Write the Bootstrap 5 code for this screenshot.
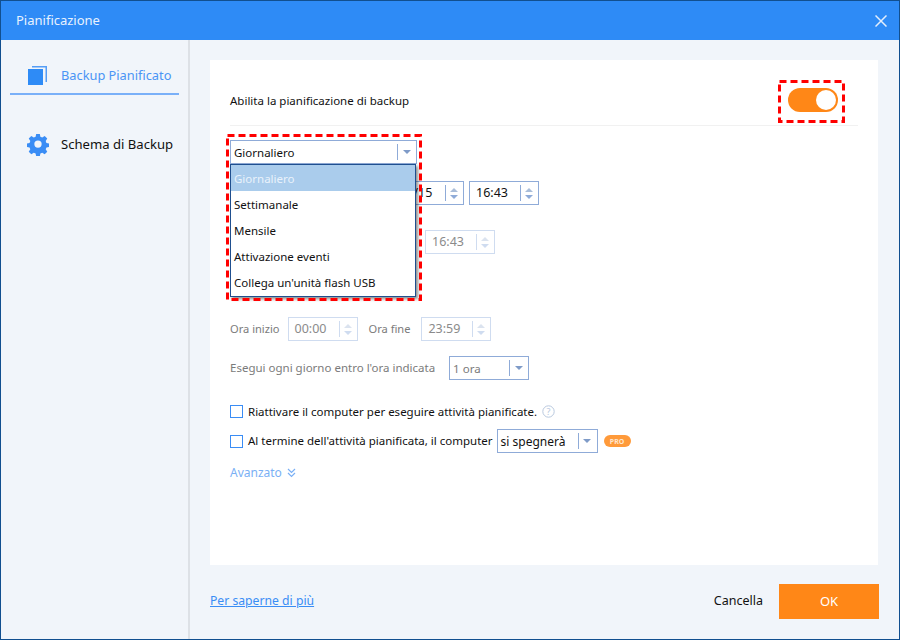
<!DOCTYPE html>
<html lang="it">
<head>
<meta charset="utf-8">
<title>Pianificazione</title>
<link href="https://cdn.jsdelivr.net/npm/bootstrap@5.3.0/dist/css/bootstrap.min.css" rel="stylesheet">
<style>
html,body{margin:0;height:640px;overflow:hidden;background:#f1f5fa}
body{font-family:"Noto Sans","DejaVu Sans",sans-serif;font-size:11.5px;color:#111;line-height:1}
.win{width:900px;height:640px;border:1px solid #114f8f;background:#f1f5fa}
.titlebar{height:39px;background:#2e8bf6;color:#e8f2fe;padding:0 15px;font-size:13px}
.titlebar svg{margin-right:-3px}
.bodyrow{height:599px}
.side{width:189px;border-right:2px solid #dde1e6;padding:9px 9px 0}
.tab{padding-left:18px;font-size:12.8px;gap:14px}
.tab-on{color:#4a94f5;border-bottom:2px solid #7ab0f8;height:46px;padding-top:8px}
.tab-off{margin-top:25px;height:50px;padding-left:17px;gap:12px;font-size:13.1px}
.mainpane{padding:20px 21px 20px 20px}
.panel{background:#fff;height:505px;padding:0 20px;position:relative}
.headrow{height:66px;border-bottom:1px solid #f1f1f1;padding-bottom:13px}
.headtext{padding-bottom:6px}
.switchy{width:50px;height:24px;border-radius:12px;background:#ff8717;position:relative;margin-right:20px}
.switchy::after{content:"";position:absolute;right:2px;top:2px;width:20px;height:20px;border-radius:50%;background:#fff}
.fld{height:24px;border:1px solid #8fabd8;background:#fff;position:relative}
.fld-dim{border-color:#cfdcf0;color:#8b8b8b}
.fld-text{padding:1px 0 0 6px;flex:1;font-size:12.5px}
.fld-date{padding-left:11px}
.fld-sel{padding-left:3px;font-size:11.5px}
.spin{width:17px;height:16px;border-left:1px solid #8fabd8;display:flex;flex-direction:column;align-items:center;justify-content:center;gap:3px;margin-right:1px}
.fld-dim .spin{border-color:#cfdcf0}
.up,.dn{width:0;height:0;border-left:4px solid transparent;border-right:4px solid transparent}
.up{border-bottom:4px solid #a9bdd9}.dn{border-top:4px solid #8fabd8}
.fld-dim .up{border-bottom-color:#dbe3ef}.fld-dim .dn{border-top-color:#cfdcf0}
.caret-box{width:18px;height:16px;border-left:1px solid #8fabd8;display:flex;align-items:center;justify-content:center;margin-right:1px}
.caret-box i{width:0;height:0;border-left:4px solid transparent;border-right:4px solid transparent;border-top:4px solid #7f9bc8}
.sel-top{width:187px;margin-top:14px}
.r1{margin-top:17px;padding-left:131px;gap:5px}
.r2{margin-top:25px;padding-left:195px}
.r3{margin-top:63px;gap:10px;color:#7b7b7b;font-size:11.1px}
.r3 .lab1{margin-right:-2px}
.r3 .lab2{margin:0 1px}
.r4{margin-top:15px;gap:14px;color:#7b7b7b}
.chk{width:13px;height:13px;border:1px solid #3a8df5;background:#fff;flex:none}
.r5{margin-top:25px;gap:5px}
.r6{margin-top:11px;gap:5px;height:24px}
.r6 .lab3{margin-right:-1px}
.r6 .sp-big{font-size:12px}
.adv{margin-top:14px;color:#7ab0f5;gap:5px;font-size:12px}
.dash{position:absolute;pointer-events:none}
.dash rect{fill:none;stroke:#f00;stroke-width:3;stroke-dasharray:7 4}
.menu-pop{position:absolute;left:20px;top:104px;width:186px;height:133px;background:#fff;border:1px solid #1f4f8f;box-shadow:2px 2px 3px rgba(0,0,0,.45)}
.menu-pop div{height:26px;padding:1px 0 0 3px;display:flex;align-items:center}
.menu-pop .act{background:#aaccec;color:#e9f2fb}
.badge-pro{width:27px;height:12px;border-radius:6px;background:#ff9a3a;color:#ffe6cd;font-size:7px;display:flex;align-items:center;justify-content:center;font-weight:700;margin-left:1px}
.footrow{height:54px;padding-top:18px}
.more{color:#3a8df5;text-decoration:underline;font-size:12.2px}
.cancel{color:#111;margin-right:16px;font-size:12.5px}
.okbtn{width:100px;height:35px;background:#ff8717;color:#fff;font-size:13px;margin-right:-1px}
</style>
</head>
<body>
<div class="win d-flex flex-column">
  <div class="titlebar d-flex align-items-center justify-content-between">
    <span>Pianificazione</span>
    <svg width="12" height="12" viewBox="0 0 12 12"><path d="M.5 .5L11.500 11.500M11.500 .5L.5 11.500" stroke="#e3eefc" stroke-width="1.500" fill="none"/></svg>
  </div>
  <div class="bodyrow d-flex">
    <div class="side">
      <div class="tab tab-on d-flex align-items-center">
        <svg width="19" height="19" viewBox="0 0 19 19"><path d="M4 0H19V16H17.500V1.500H4Z" fill="#3a8df5" opacity=".85"/><rect x="0" y="3" width="15" height="16" fill="#2e8bf6"/></svg>
        <span>Backup Pianificato</span>
      </div>
      <div class="tab tab-off d-flex align-items-center">
        <svg width="22" height="22" viewBox="0 0 24 24"><path fill="#3a8df5" fill-rule="evenodd" d="M10 1h4l.6 3.100 2 .8L19.300 3.200l2.800 2.800-1.700 2.700.8 2 3 .6v3.800l-3 .6-.8 2 1.700 2.700-2.800 2.800-2.700-1.700-2 .8-.6 3h-4l-.6-3-2-.8-2.700 1.700-2.800-2.800 1.700-2.700-.8-2-3-.6v-3.800l3-.6.8-2L1.900 6l2.800-2.800 2.700 1.700 2-.8zM12 8a4 4 0 1 0 0 8 4 4 0 0 0 0-8z" transform="translate(0 -1)"/></svg>
        <span>Schema di Backup</span>
      </div>
    </div>
    <div class="mainpane flex-grow-1 d-flex flex-column">
      <div class="panel">
        <div class="headrow d-flex align-items-end justify-content-between">
          <span class="headtext">Abilita la pianificazione di backup</span>
          <span class="switchy"></span>
        </div>
        <div class="fld sel-top d-flex align-items-center"><span class="fld-text fld-sel">Giornaliero</span><span class="caret-box"><i></i></span></div>
        <div class="r1 d-flex">
          <div class="fld d-flex align-items-center" style="width:103px"><span class="fld-text fld-date">2021/3/15</span><span class="spin"><b class="up"></b><b class="dn"></b></span></div>
          <div class="fld d-flex align-items-center" style="width:70px"><span class="fld-text">16:43</span><span class="spin"><b class="up"></b><b class="dn"></b></span></div>
        </div>
        <div class="r2 d-flex">
          <div class="fld fld-dim d-flex align-items-center" style="width:70px"><span class="fld-text">16:43</span><span class="spin"><b class="up"></b><b class="dn"></b></span></div>
        </div>
        <div class="r3 d-flex align-items-center">
          <span class="lab1">Ora inizio</span>
          <div class="fld fld-dim d-flex align-items-center" style="width:70px"><span class="fld-text">00:00</span><span class="spin"><b class="up"></b><b class="dn"></b></span></div>
          <span class="lab2">Ora fine</span>
          <div class="fld fld-dim d-flex align-items-center" style="width:70px"><span class="fld-text">23:59</span><span class="spin"><b class="up"></b><b class="dn"></b></span></div>
        </div>
        <div class="r4 d-flex align-items-center">
          <span>Esegui ogni giorno entro l'ora indicata</span>
          <div class="fld d-flex align-items-center" style="width:80px"><span class="fld-text fld-sel">1 ora</span><span class="caret-box"><i></i></span></div>
        </div>
        <div class="r5 d-flex align-items-center">
          <span class="chk"></span><span>Riattivare il computer per eseguire attività pianificate.</span>
          <svg width="13" height="13" viewBox="0 0 13 13"><circle cx="6.500" cy="6.500" r="5.700" fill="none" stroke="#b8c8de" stroke-width="1"/><text x="6.500" y="9.500" font-size="9" text-anchor="middle" fill="#b8c8de" font-family="Noto Sans">?</text></svg>
        </div>
        <div class="r6 d-flex align-items-center">
          <span class="chk"></span><span class="lab3">Al termine dell'attività pianificata, il computer</span>
          <div class="fld d-flex align-items-center" style="width:101px"><span class="fld-text fld-sel sp-big">si spegnerà</span><span class="caret-box"><i></i></span></div>
          <span class="badge-pro">PRO</span>
        </div>
        <div class="adv d-flex align-items-center">
          <span>Avanzato</span>
          <svg width="9" height="10" viewBox="0 0 9 10"><path d="M1 1l3.500 3.500L8 1M1 5l3.500 3.500L8 5" fill="none" stroke="#7ab0f5" stroke-width="1.200"/></svg>
        </div>
        <div class="menu-pop">
          <div class="act">Giornaliero</div><div>Settimanale</div><div>Mensile</div><div>Attivazione eventi</div><div>Collega un'unità flash USB</div>
        </div>
        <svg class="dash" style="left:16px;top:74px" width="196" height="167"><rect x="1.500" y="1.500" width="193" height="164"/></svg>
        <svg class="dash" style="left:568px;top:20px" width="67" height="43"><rect x="1.500" y="1.500" width="64" height="40"/></svg>
      </div>
      <div class="footrow d-flex align-items-center justify-content-between mt-auto">
        <a class="more">Per saperne di più</a>
        <div class="d-flex align-items-center"><span class="cancel">Cancella</span><span class="okbtn d-flex align-items-center justify-content-center">OK</span></div>
      </div>
    </div>
  </div>
</div>
</body>
</html>
